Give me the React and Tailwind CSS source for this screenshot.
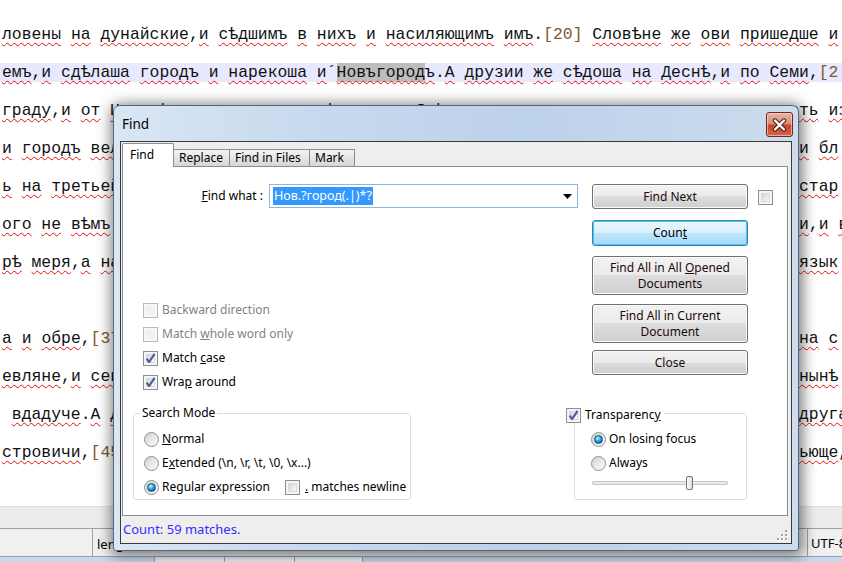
import React from "react";

const FILL =
  "словѣни же пришедше сѣдоша по Днѣпру и нарекошася поляне а друзии древляне зане сѣдоша в лѣсѣх ";

// builds a line whose left part and right part land on the visible columns
const row = (left, right, at = 81) =>
  left + (FILL + FILL).slice(0, at - left.length) + right;

const lines = [
  { t: "ловены на дунайские,и сѣдшимъ в нихъ и насиляющимъ имъ.[20] Словѣне же ови пришедше и" },
  {
    t: "емъ,и сдѣлаша городъ и нарекоша и´Новъгородъ.А друзии же сѣдоша на Деснѣ,и по Семи,[2",
    sel: [34, 43],
    cur: true,
  },
  { t: row("граду,и от Ц", "ть из") },
  { t: row("и городъ вел", ",и бл ", 80) },
  { t: row("ь на третьей", "стар ") },
  { t: row("ого не вѣмъ ", "и,и в") },
  { t: row("рѣ меря,а на", ",язык ", 80) },
  { t: "" },
  { t: row("а и обре,[37", "на с ") },
  { t: row("евляне,и сев", "нынѣ ") },
  { t: row(" вдадуче.А д", "друга") },
  { t: row("стровичи,[45", "ьюще,") },
];

function Words({ text }) {
  return text.split(/([\u0400-\u04FF]+)/).map((p, i) =>
    /[\u0400-\u04FF]/.test(p) ? (
      <span
        key={i}
        className="underline decoration-wavy decoration-[#e01010] decoration-1 underline-offset-[3px]"
      >
        {p}
      </span>
    ) : (
      <span key={i}>
        {p.split(/(\[[0-9]*\]?)/).map((q, j) =>
          q.startsWith("[") ? (
            <span key={j} className="text-[#80582f]">
              {q}
            </span>
          ) : (
            q
          )
        )}
      </span>
    )
  );
}

function Line({ t, sel, cur }) {
  return (
    <>
      <div className="h-[19px]" />
      <div
        className={
          cur
            ? "h-[19px] leading-[19px] whitespace-pre pl-[2px] bg-[#e8e8ff]"
            : "h-[19px] leading-[19px] whitespace-pre pl-[2px]"
        }
      >
        {sel ? (
          <>
            <Words text={t.slice(0, sel[0])} />
            <span className="bg-[#bdbdbd]">
              <Words text={t.slice(sel[0], sel[1])} />
            </span>
            <Words text={t.slice(sel[1])} />
          </>
        ) : (
          <Words text={t} />
        )}
      </div>
    </>
  );
}

function Check({ on, off }) {
  return (
    <span
      className={
        off
          ? "relative flex w-[15px] h-[15px] shrink-0 border border-[#b9b9b9] bg-[#f7f7f7] p-[2px]"
          : "relative flex w-[15px] h-[15px] shrink-0 border border-[#8e8f8f] bg-[#f4f4f4] p-[2px]"
      }
    >
      <span
        className={
          off
            ? "flex-1 bg-[#f1f1f1]"
            : "flex-1 border border-[#d8dadc] bg-[linear-gradient(135deg,#d0d3d8,#fbfbfb)]"
        }
      />
      {on && (
        <svg className="absolute left-0 top-0" width="13" height="13" viewBox="0 0 13 13">
          <path
            d="M2.6 6.6 L5.2 10 L10.6 1.8"
            fill="none"
            stroke="#4a5d94"
            strokeWidth="2.1"
            strokeLinejoin="round"
          />
        </svg>
      )}
    </span>
  );
}

function Radio({ on }) {
  return (
    <span className="flex items-center justify-center w-[15px] h-[15px] shrink-0 rounded-full border border-[#8e8f8f] bg-[linear-gradient(135deg,#cfd2d6,#fdfdfd)]">
      {on && (
        <span className="w-[9px] h-[9px] rounded-full border border-[#1b4f7c] bg-[radial-gradient(circle_at_38%_32%,#d2f3ff_0%,#43b8ec_35%,#0f5f98_80%)]" />
      )}
    </span>
  );
}

const btn =
  "w-[156px] rounded-[3px] border border-[#707070] bg-[linear-gradient(#f2f2f2_0%,#ebebeb_50%,#dddddd_50%,#cfcfcf_100%)] shadow-[inset_0_0_0_1px_#fbfbfb] flex items-center justify-center text-center leading-[16px] text-[#1a0a0a]";

function CheckRow({ on, off, children }) {
  return (
    <div className="h-[24px] flex items-center gap-[4px]">
      <Check on={on} off={off} />
      <span className={off ? "text-[#838383]" : ""}>{children}</span>
    </div>
  );
}

function RadioRow({ on, children }) {
  return (
    <div className="h-[24px] flex items-center gap-[3px]">
      <Radio on={on} />
      <span>{children}</span>
    </div>
  );
}

function CloseBtn() {
  return (
    <div className="ml-auto mt-[6px] w-[27px] h-[25px] rounded-[3px] border border-[#6e2a1f] bg-[linear-gradient(#eab2a4_0%,#dc8f7b_45%,#c8452a_55%,#d4664c_100%)] shadow-[inset_0_0_0_1px_rgba(255,220,210,0.6)] flex items-center justify-center">
      <svg width="15" height="14" viewBox="0 0 15 14">
        <path d="M3 2.5 L12 11.5 M12 2.5 L3 11.5" stroke="#4b1a12" strokeWidth="4.4" strokeLinecap="round" />
        <path d="M3 2.5 L12 11.5 M12 2.5 L3 11.5" stroke="#ffffff" strokeWidth="2.4" strokeLinecap="round" />
      </svg>
    </div>
  );
}

function Grip() {
  const dots = [
    [8, 0],
    [4, 4],
    [8, 4],
    [0, 8],
    [4, 8],
    [8, 8],
  ];
  return (
    <svg className="absolute right-[3px] bottom-[2px]" width="11" height="11" viewBox="0 0 11 11">
      {dots.map(([x, y], i) => (
        <g key={i}>
          <rect x={x + 1} y={y + 1} width="2" height="2" fill="#ffffff" />
          <rect x={x} y={y} width="2" height="2" fill="#a3a3a3" />
        </g>
      ))}
    </svg>
  );
}

function FindDialog() {
  return (
    <div className="absolute left-[113px] top-[105px] w-[686px] h-[446px] rounded-t-[7px] rounded-b-[3px] border border-[#55667c] bg-[linear-gradient(90deg,#d9e6f4_0%,#c7d9ee_30%,#bcd1ea_60%,#cddcee_100%)] shadow-[1px_2px_14px_3px_rgba(0,0,0,0.5)] flex flex-col font-['Noto_Sans',sans-serif] text-[12px] text-black">
      {/* title bar */}
      <div className="h-[35px] flex items-start pl-[8px] pr-[5px]">
        <span className="mt-[8px] text-[13.5px] leading-[20px]">Find</span>
        <CloseBtn />
      </div>

      {/* client area */}
      <div className="mx-[6px] mb-[6px] flex-1 border border-[#3a3a3a] bg-[#f0eded] flex flex-col">
        <div className="flex-1 flex flex-col pl-[1px] pr-[3px] pt-[1px]">
          {/* tabs */}
          <div className="h-[23px] flex items-end">
            <div className="relative z-10 -mb-px h-[24px] w-[52px] border border-b-0 border-[#898c95] bg-white rounded-t-[2px] pl-[7px] pt-[3px] leading-[16px]">
              Find
            </div>
            <div className="-ml-px h-[17px] w-[57px] border border-b-0 border-[#898c95] bg-[linear-gradient(#f3f3f3,#d6d6d6)] pl-[5px] leading-[15px]">
              Replace
            </div>
            <div className="-ml-px h-[17px] w-[81px] border border-b-0 border-[#898c95] bg-[linear-gradient(#f3f3f3,#d6d6d6)] pl-[5px] leading-[15px]">
              Find in Files
            </div>
            <div className="-ml-px h-[17px] w-[46px] border border-b-0 border-[#898c95] bg-[linear-gradient(#f3f3f3,#d6d6d6)] pl-[5px] leading-[15px]">
              Mark
            </div>
          </div>

          {/* panel */}
          <div className="flex-1 border border-[#898c95] bg-white flex flex-col pt-[17px]">
            <div className="flex">
              <div className="w-[456px]">
                <div className="h-[24px] flex items-center">
                  <span className="w-[140px] text-right">
                    <u>F</u>ind what :
                  </span>
                  <div className="ml-[6px] w-[309px] h-[24px] border border-[#8fb6de] bg-white flex items-center pl-[3px]">
                    <span className="bg-[#3399ff] text-white text-[12.5px] leading-[18px] px-px">
                      Нов.?город(.|)*?
                    </span>
                    <svg className="ml-auto mr-[5px]" width="9" height="5" viewBox="0 0 9 5">
                      <path d="M0 0 H9 L4.5 5 Z" fill="#000" />
                    </svg>
                  </div>
                </div>
                <div className="mt-[90px] pl-[20px]">
                  <CheckRow off>Backward direction</CheckRow>
                  <CheckRow off>
                    Match <u>w</u>hole word only
                  </CheckRow>
                  <CheckRow on>
                    Match <u>c</u>ase
                  </CheckRow>
                  <CheckRow on>
                    Wra<u>p</u> around
                  </CheckRow>
                </div>
              </div>

              <div className="ml-[13px] flex items-start">
                <div className="flex flex-col">
                  <div className={`${btn} h-[25px]`}>
                    <span>Find Next</span>
                  </div>
                  <div className="mt-[11px] h-[26px] w-[156px] rounded-[3px] border border-[#3c7fb1] bg-[linear-gradient(#eaf6fd_0%,#d9f0fc_50%,#bee6fd_50%,#a7d9f5_100%)] shadow-[inset_0_0_0_1px_#48c6f7] flex items-center justify-center">
                    <span>
                      Coun<u>t</u>
                    </span>
                  </div>
                  <div className={`${btn} mt-[10px] h-[39px]`}>
                    <span>
                      Find All in All <u>O</u>pened
                      <br />
                      Documents
                    </span>
                  </div>
                  <div className={`${btn} mt-[9px] h-[39px]`}>
                    <span>
                      Find All in Current
                      <br />
                      Document
                    </span>
                  </div>
                  <div className={`${btn} mt-[7px] h-[25px]`}>
                    <span>Close</span>
                  </div>
                </div>
                <div className="ml-[10px] mt-[6px]">
                  <Check />
                </div>
              </div>
            </div>

            {/* group boxes */}
            <div className="flex mt-[19px] pl-[10px]">
              <div className="relative w-[278px] h-[87px] border border-[#d5dfe5] rounded-[3px] pt-[13px] pl-[10px]">
                <span className="absolute -top-[9px] left-[6px] bg-white px-[2px] leading-[16px]">
                  Search Mode
                </span>
                <RadioRow>
                  <u>N</u>ormal
                </RadioRow>
                <RadioRow>
                  E<u>x</u>tended (\n, \r, \t, \0, \x...)
                </RadioRow>
                <div className="h-[24px] flex items-center">
                  <div className="w-[141px] flex items-center gap-[3px]">
                    <Radio on />
                    <span>
                      Re<u>g</u>ular expression
                    </span>
                  </div>
                  <Check />
                  <span className="ml-[5px] w-[102px] overflow-hidden whitespace-nowrap">
                    <u>.</u> matches newline
                  </span>
                </div>
              </div>

              <div className="relative ml-[163px] w-[173px] h-[87px] border border-[#d5dfe5] rounded-[3px] pt-[13px] pl-[16px]">
                <div className="absolute -top-[7px] -left-[9px] bg-white flex items-center gap-[4px] pr-[3px]">
                  <Check on />
                  <span className="leading-[16px]">
                    Transparenc<u>y</u>
                  </span>
                </div>
                <RadioRow on>On losing focus</RadioRow>
                <RadioRow>Always</RadioRow>
                <div className="relative ml-[1px] h-[16px] w-[136px] flex items-center">
                  <div className="h-[4px] w-full border border-[#c6c9cc] bg-[#e7eaea] rounded-[1px]" />
                  <div className="absolute left-[94px] top-[1px] w-[7px] h-[14px] rounded-[2px] border border-[#6f7478] bg-[linear-gradient(90deg,#ffffff,#dcdcdc)]" />
                </div>
              </div>
            </div>
          </div>
        </div>

        {/* status */}
        <div className="relative h-[27px] flex items-center pl-[2px] text-[13px] text-[#3030ff]">
          Count: 59 matches.
          <Grip />
        </div>
      </div>
    </div>
  );
}

export default function App() {
  return (
    <div className="relative w-[842px] h-[562px] overflow-hidden bg-white flex flex-col">
      {/* editor text */}
      <div className="flex-1 overflow-hidden pt-[6px] font-['Liberation_Mono',monospace] text-[16.4px] text-[#111]">
        {lines.map((l, i) => (
          <Line key={i} {...l} />
        ))}
      </div>

      {/* horizontal scrollbar */}
      <div className="h-[22px] shrink-0 bg-[#ececec] border-t border-[#e0e0e0]" />

      {/* status bar */}
      <div className="h-[28px] shrink-0 bg-[#f0f0f0] border-t border-[#a0a0a0] flex items-stretch font-['Noto_Sans',sans-serif] text-[13px] text-black whitespace-nowrap overflow-hidden">
        <div className="w-[93px] shrink-0 border-r border-[#a0a0a0]" />
        <div className="w-[714px] shrink-0 pl-[4px] pt-[6px] leading-[18px]">length : 16294    lines : 96</div>
        <div className="shrink-0 border-l border-[#a0a0a0] pl-[3px] pt-[5px] leading-[18px]">UTF-8 w/o BOM</div>
      </div>

      {/* taskbar strip */}
      <div className="h-[6px] shrink-0 bg-[#c9d8ea] border-t border-[#8ea3bd] flex">
        <div className="w-[155px] border-r border-[#8ea3bd]" />
        <div className="w-[70px] bg-[#eef2f7] border-r border-[#8ea3bd]" />
        <div className="w-[70px] bg-[#eef2f7] border-r border-[#8ea3bd]" />
        <div className="w-[68px] bg-[#eef2f7] border-r border-[#8ea3bd]" />
      </div>

      <FindDialog />
    </div>
  );
}
